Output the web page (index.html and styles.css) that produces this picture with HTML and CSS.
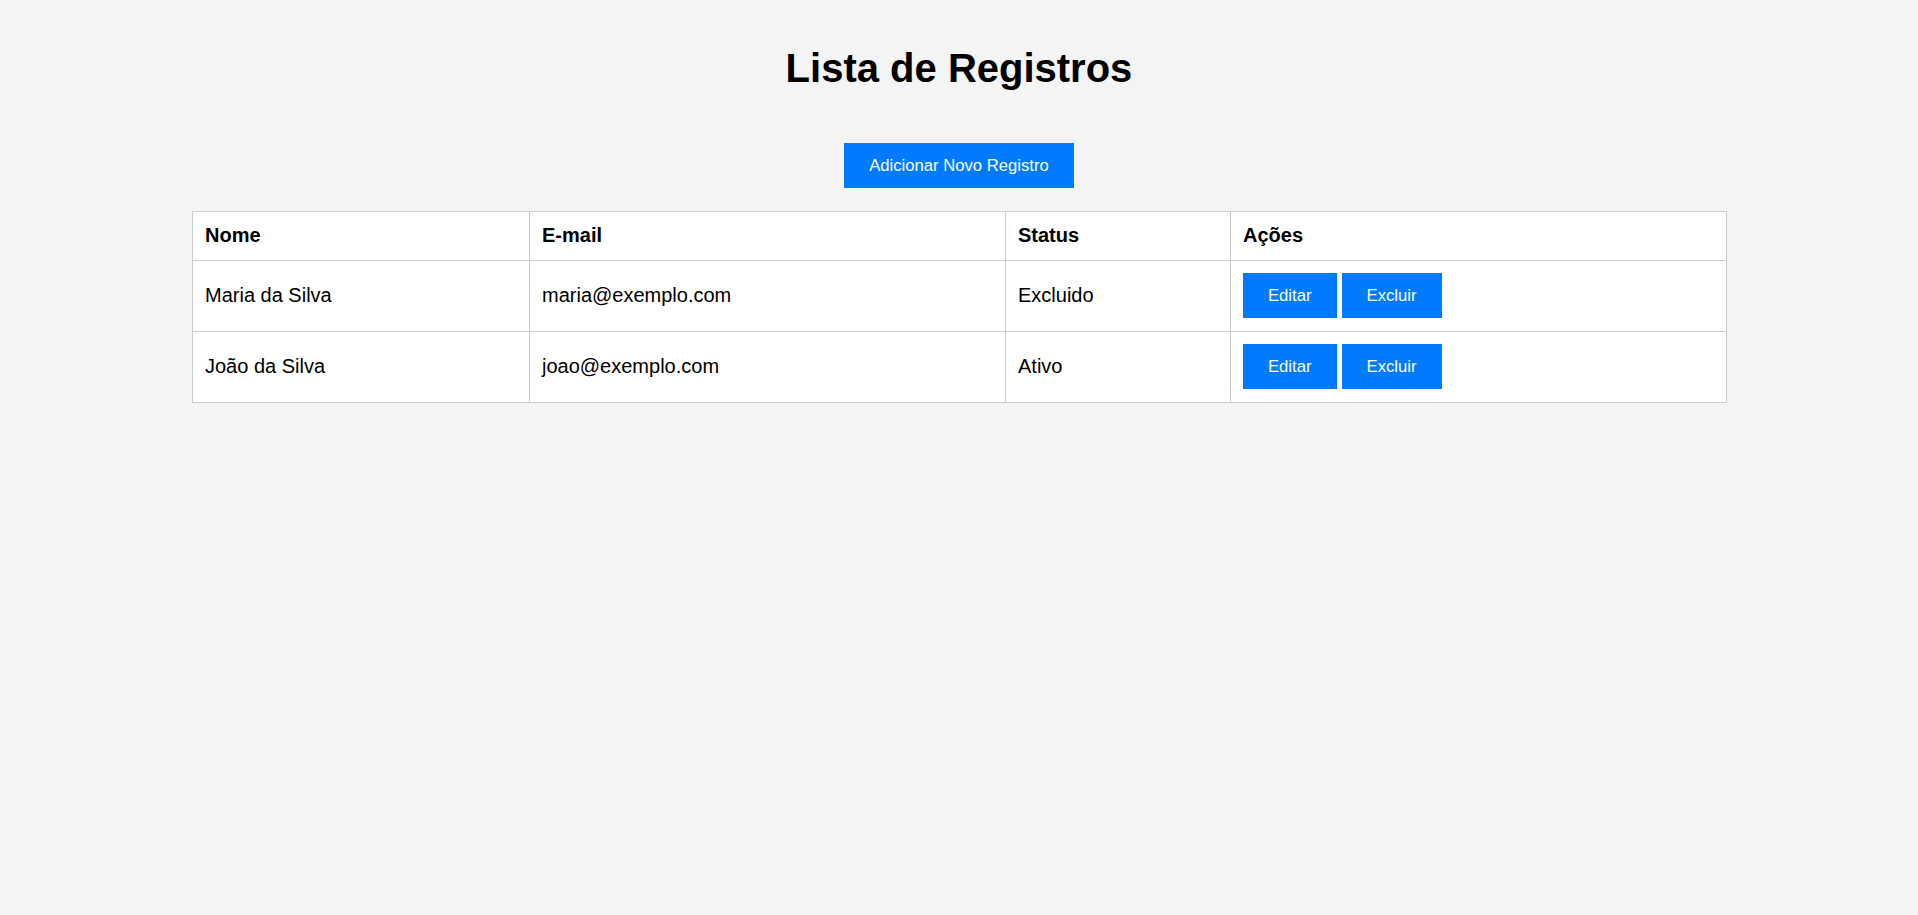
FILE: index.html
```html
<!DOCTYPE html>
<html lang="pt-BR">
<head>
<meta charset="utf-8">
<title>Lista de Registros</title>
<link rel="stylesheet" href="styles.css">
</head>
<body>
<h1 class="title">Lista de Registros</h1>
<div class="toolbar">
  <button class="btn btn-add">Adicionar Novo Registro</button>
</div>
<table class="records">
  <colgroup>
    <col class="col-nome">
    <col class="col-email">
    <col class="col-status">
    <col class="col-acoes">
  </colgroup>
  <thead>
    <tr>
      <th>Nome</th>
      <th>E-mail</th>
      <th>Status</th>
      <th>Ações</th>
    </tr>
  </thead>
  <tbody>
    <tr>
      <td>Maria da Silva</td>
      <td>maria@exemplo.com</td>
      <td>Excluido</td>
      <td><div class="actions"><button class="btn">Editar</button><button class="btn">Excluir</button></div></td>
    </tr>
    <tr>
      <td>João da Silva</td>
      <td>joao@exemplo.com</td>
      <td>Ativo</td>
      <td><div class="actions"><button class="btn">Editar</button><button class="btn">Excluir</button></div></td>
    </tr>
  </tbody>
</table>
</body>
</html>
```
FILE: styles.css
```css
html, body {
  margin: 0;
  padding: 0;
}
body {
  background: #f4f4f4;
  font-family: "Liberation Sans", Arial, Helvetica, sans-serif;
  color: #000;
}
.title {
  margin: 45px 0 0;
  font-size: 40px;
  line-height: 46px;
  font-weight: bold;
  text-align: center;
}
.toolbar {
  margin-top: 52px;
  display: flex;
  justify-content: center;
}
.btn {
  display: block;
  border: none;
  margin: 0;
  background: #007bff;
  color: #fff;
  font-family: "Liberation Sans", Arial, Helvetica, sans-serif;
  font-size: 16.67px;
  line-height: 20px;
  padding: 12.5px 25px;
  cursor: pointer;
}
.records {
  margin: 23px auto 0;
  width: 1534px;
  border-collapse: collapse;
  table-layout: fixed;
  background: #fff;
}
.col-nome { width: 337px; }
.col-email { width: 476px; }
.col-status { width: 225px; }
.col-acoes { width: 496px; }
.records th,
.records td {
  border: 1px solid #cccccc;
  padding: 12px 12.5px 13px;
  text-align: left;
  font-size: 20px;
  line-height: 23px;
  vertical-align: middle;
}
.records th {
  font-weight: bold;
}
.actions {
  display: flex;
  gap: 5px;
}
```
